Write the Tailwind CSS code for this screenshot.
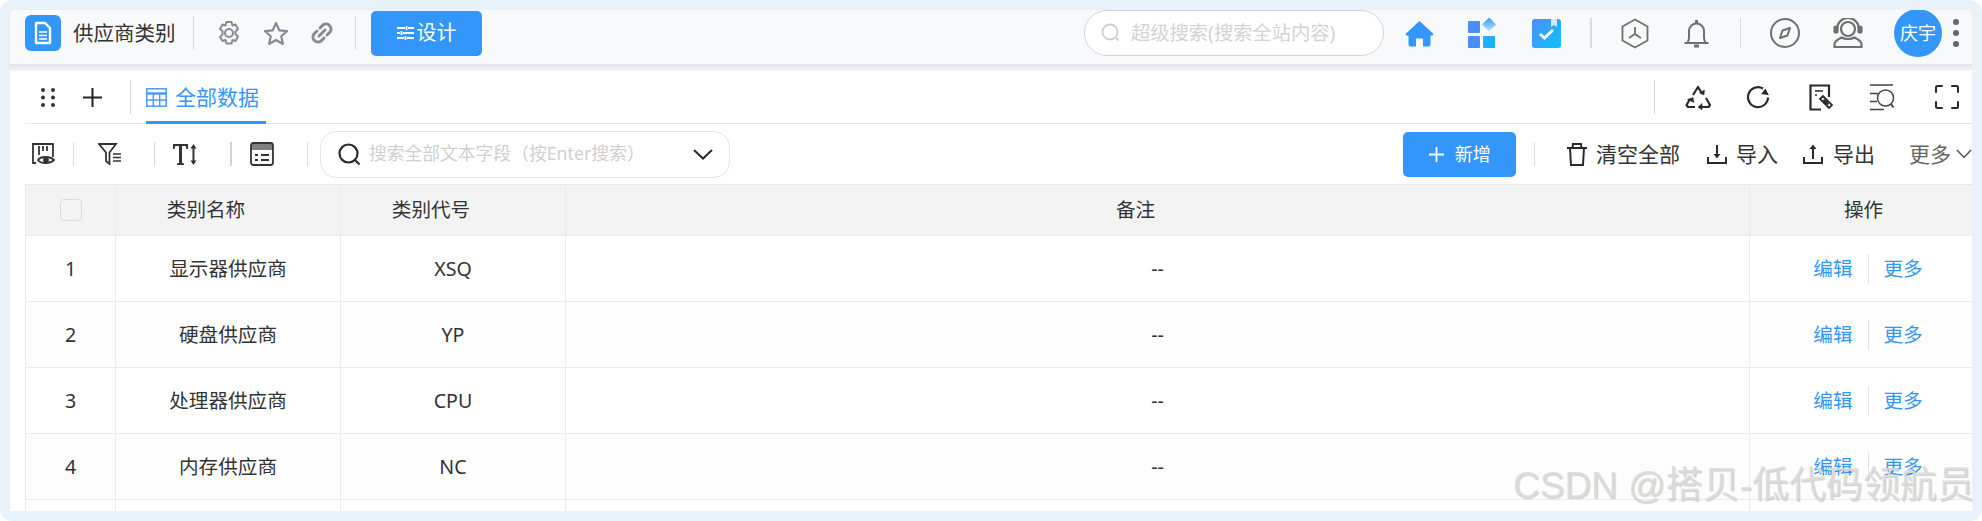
<!DOCTYPE html>
<html lang="zh-CN">
<head>
<meta charset="UTF-8">
<title>供应商类别</title>
<script src="https://cdn.jsdelivr.net/npm/@tailwindcss/browser@4"></script>
</head>
<body class="bg-white overflow-hidden font-['Noto_Sans','Noto_Sans_CJK_SC',sans-serif] text-[#333]">
<div class="relative h-[521px] w-[1982px] rounded-[12px] bg-[#e9f1fb] p-[10px]">
  <div class="flex h-[501px] flex-col overflow-hidden bg-white rounded-tl-[6px] rounded-tr-[6px]">

    <!-- Top bar -->
    <header class="flex h-[54px] shrink-0 items-center bg-[#f8f9fb] pb-2">
      <div class="ml-[15px] flex h-9 w-9 items-center justify-center rounded-[6px] bg-[#3296fa]">
        <svg width="20" height="24" viewBox="0 0 20 24" fill="none"><path d="M3 2h9l5 5v15H3z" stroke="#fff" stroke-width="2.4" stroke-linejoin="round"/><path d="M6 11h8M6 14.5h8M6 18h8" stroke="#fff" stroke-width="1.6"/></svg>
      </div>
      <span class="ml-3 w-[103px] text-[20.5px] leading-none whitespace-nowrap">供应商类别</span>
      <i class="ml-[17px] h-[34px] w-px bg-[#d8d8d8]"></i>
      <svg class="ml-[23px]" width="24" height="26" viewBox="0 0 24 26" fill="none" stroke="#858c96" stroke-width="2" stroke-linejoin="round"><path d="M9.5 2h5l1 3.5 3-1 2.5 4.5-2.500 2.500v2.500l2.500 2.500-2.500 4.500-3-1-1 3.500h-5l-1-3.500-3 1L3 17l2.500-2.500V11L3 9l2.500-4.500 3 1z"/><circle cx="12" cy="13" r="4"/></svg>
      <svg class="ml-[22px]" width="26" height="25" viewBox="0 0 26 25" fill="none" stroke="#858c96" stroke-width="2.200" stroke-linejoin="round"><path d="M13 2l3.300 7.300 7.700.8-5.800 5.200 1.700 7.700L13 19l-6.900 4 1.700-7.700L2 10.100l7.700-.8z"/></svg>
      <svg class="ml-[21px]" width="24" height="24" viewBox="0 0 24 24" fill="none" stroke="#858c96" stroke-width="3" stroke-linecap="round"><path d="M10 7l3-3a5 5 0 0 1 7 7l-3 3M14 17l-3 3a5 5 0 0 1-7-7l3-3M9 15l6-6"/></svg>
      <i class="ml-[21px] h-[34px] w-px bg-[#d8d8d8]"></i>
      <button class="ml-[15px] flex h-[45px] w-[111px] items-center justify-center rounded-[5px] bg-[#3296fa] text-[20px] text-white">
        <svg class="mr-[3px]" width="17" height="16" viewBox="0 0 17 16" stroke="#fff" stroke-width="1.800"><path d="M0 3h8M11 3h6M0 8h3M6 8h11M0 13h7M10 13h7M9.500 1v4M4.500 6v4M8.500 11v4"/></svg>设计
      </button>

      <div class="ml-[602px] flex h-[46px] w-[300px] items-center rounded-full border border-[#cdd3e0] bg-white pl-4">
        <svg width="20" height="20" viewBox="0 0 20 20" fill="none" stroke="#cfcfcf" stroke-width="1.800"><circle cx="9" cy="9" r="7.500"/><path d="M14.500 14.500l3 3"/></svg>
        <span class="ml-[10px] text-[19.300px] leading-none whitespace-nowrap text-[#d3d3d3]">超级搜索(搜索全站内容)</span>
      </div>
      <svg class="ml-[21px]" width="29" height="27" viewBox="0 0 29 27" fill="#3296fa"><path d="M14.500 1L28 13.500c.8.900.2 2-1 2h-1.500v9a2 2 0 0 1-2 2H18v-8h-7v8H5.500a2 2 0 0 1-2-2v-9H2c-1.200 0-1.800-1.100-1-2z"/></svg>
      <svg class="ml-[34px]" width="29" height="30" viewBox="0 0 29 30"><defs><linearGradient id="g1" x1="0" y1="0" x2="1" y2="1"><stop offset="0" stop-color="#2f9bff"/><stop offset="1" stop-color="#c5e6ff"/></linearGradient></defs><rect y="3" width="12" height="12" rx="1" fill="#4a8dfb"/><rect y="18" width="12" height="12" rx="1" fill="#4a8dfb"/><rect x="15" y="18" width="12" height="12" rx="1" fill="#1cb0ff"/><rect x="16" y="1.500" width="10" height="10" rx="1" fill="url(#g1)" transform="rotate(45 21 6.500)"/></svg>
      <svg class="ml-[35px]" width="29" height="29" viewBox="0 0 29 29"><defs><linearGradient id="g2" x1="0" y1="0" x2="1" y2="1"><stop offset="0" stop-color="#4c8dfb"/><stop offset="1" stop-color="#0cc4ff"/></linearGradient></defs><rect width="29" height="29" rx="3" fill="url(#g2)"/><path d="M19 0h6v8l-3-2-3 2z" fill="#cfe9ff"/><path d="M8 15l4.500 4L21 11" fill="none" stroke="#fff" stroke-width="3"/></svg>
      <i class="ml-[29px] h-[30px] w-[2px] bg-[#dcdcdc]"></i>
      <svg class="ml-[29px]" width="28" height="31" viewBox="0 0 28 31" fill="none" stroke="#6f6f6f" stroke-width="1.800"><path d="M14 1.500l12.500 7v14L14 29.500l-12.500-7v-14z"/><path d="M14 9v7M14 16l-6 4M14 16l6 4"/></svg>
      <svg class="ml-[34px]" width="27" height="31" viewBox="0 0 26 31" fill="none" stroke="#6f6f6f" stroke-width="2"><path d="M1 25h24M4 25c1-2 1.500-3 1.500-6v-6a7.500 7.500 0 0 1 15 0v6c0 3 .5 4 1.500 6"/><path d="M13 2v3" stroke-width="3"/><path d="M10.500 28h5" stroke-width="3"/></svg>
      <i class="ml-[30px] h-[30px] w-px bg-[#dcdcdc]"></i>
      <svg class="ml-[29px]" width="30" height="30" viewBox="0 0 30 30" fill="none" stroke="#6f6f6f" stroke-width="2"><circle cx="15" cy="15" r="14"/><path d="M20 10l-2.500 7.500L10 20l2.500-7.500z" stroke-linejoin="round"/></svg>
      <svg class="ml-[33px]" width="30" height="30" viewBox="0 0 30 30" fill="none" stroke="#6f6f6f" stroke-width="2.200"><circle cx="15" cy="11" r="7"/><path d="M4 14V11a11 11 0 0 1 22 0v3"/><rect x="1.500" y="8.500" width="3" height="6" rx="1.500" fill="#6f6f6f"/><rect x="25.500" y="8.500" width="3" height="6" rx="1.500" fill="#6f6f6f"/><path d="M1.500 29v-3c0-3 5-5.500 7-6.500 3 2 10 2 13 0 2 1 7 3.500 7 6.500v3z"/></svg>
      <div class="ml-[31px] flex h-12 w-12 items-center justify-center rounded-full bg-[#3296fa] text-[18px] text-white">庆宇</div>
      <div class="ml-[11px] flex flex-col gap-[5px]"><i class="h-[6px] w-[6px] rounded-full bg-[#666]"></i><i class="h-[6px] w-[6px] rounded-full bg-[#666]"></i><i class="h-[6px] w-[6px] rounded-full bg-[#666]"></i></div>
    </header>

    <div class="h-[7px] shrink-0 bg-linear-to-b from-[#e2e4e9] to-[#f3f4f6]"></div>

    <main class="flex min-h-0 flex-1 flex-col pl-[15px]">
      <!-- Tabs row -->
      <div class="flex h-[53px] shrink-0 items-center border-b border-[#e6e6e6]">
        <svg class="ml-4" width="14" height="19" viewBox="0 0 14 19" fill="#333"><circle cx="2" cy="2" r="2"/><circle cx="12" cy="2" r="2"/><circle cx="2" cy="9.500" r="2"/><circle cx="12" cy="9.500" r="2"/><circle cx="2" cy="17" r="2"/><circle cx="12" cy="17" r="2"/></svg>
        <svg class="ml-[28px]" width="19" height="19" viewBox="0 0 19 19" stroke="#222" stroke-width="2"><path d="M9.500 0v19M0 9.500h19"/></svg>
        <i class="ml-[28px] h-[34px] w-px bg-[#d8d8d8]"></i>
        <div class="relative ml-[15px] flex h-[53px] w-[120px] items-center border-b-[3px] border-[#3296fa] pt-[3px] text-[#3296fa]">
          <svg width="21" height="19" viewBox="0 0 21 19" fill="none" stroke="#4b9bfb" stroke-width="1.500"><rect x=".8" y=".8" width="19.400" height="17.400"/><path d="M.8 5.500h19.400" stroke-width="2.500"/><path d="M.8 12h19.400M7.300 5.500v12.700M13.700 5.500v12.700"/></svg>
          <span class="ml-2 text-[21px] leading-none">全部数据</span>
        </div>
        <i class="ml-[1388px] h-[34px] w-px bg-[#d8d8d8]"></i>
        <svg class="ml-[30px]" width="26" height="25" viewBox="0 0 26 25" fill="none" stroke="#2a2a2a" stroke-width="2.200" stroke-linejoin="round"><path d="M8 10l5-8 4 6.500"/><path d="M14.500 8l4.500 2 .5-5z" fill="#2a2a2a" stroke-width="0.500"/><path d="M21 13l4 7-1.500 2H16"/><path d="M17 18.500l-4 3.500 4 3z" fill="#2a2a2a" stroke-width="0.500"/><path d="M10 22H3l-1.500-2L5 14"/><path d="M2.500 14.500l5.500-2 1 5z" fill="#2a2a2a" stroke-width="0.500"/></svg>
        <svg class="ml-[35px]" width="25" height="25" viewBox="0 0 25 25" fill="none" stroke="#2a2a2a" stroke-width="2.200"><path d="M22 12.500A10 10 0 1 1 17 3.500"/><path d="M17 4l7 3-6.500 4z" fill="#2a2a2a" stroke="none" transform="rotate(40 19 7)"/></svg>
        <svg class="ml-[38px]" width="24" height="27" viewBox="0 0 24 27" fill="none" stroke="#2a2a2a" stroke-width="2.200"><path d="M20 13V1.500H1.500v24H12"/><path d="M6 7h8M6 11h2" stroke-width="1.500"/><path d="M11 15l3-3 4 4-3 3zM16 20l3-3 4 4-3 3zM14.500 15.500l5 5" stroke-width="1.800"/></svg>
        <svg class="ml-[37px]" width="26" height="27" viewBox="0 0 26 27" fill="none" stroke="#444" stroke-width="1.500"><path d="M0 1h23M0 9.500h8M0 17.500h7M0 25.500h14"/><circle cx="15.500" cy="14" r="8"/><path d="M21 20l2.500 3.500" stroke-width="2"/></svg>
        <svg class="ml-[39px]" width="24" height="24" viewBox="0 0 24 24" fill="none" stroke="#2a2a2a" stroke-width="2" stroke-linecap="round"><path d="M1 7V2.500A1.500 1.500 0 0 1 2.500 1H7M17 1h4.500A1.500 1.500 0 0 1 23 2.500V7M23 17v4.500a1.500 1.500 0 0 1-1.500 1.500H17M7 23H2.500A1.500 1.500 0 0 1 1 21.500V17"/></svg>
      </div>

      <!-- Toolbar -->
      <div class="flex h-[60px] shrink-0 items-center">
        <svg class="ml-[7px]" width="23" height="22" viewBox="0 0 23 22" fill="none" stroke="#333" stroke-width="1.800"><path d="M4 20H1V1h20v13M7 3v9M11 3v5M15 3v5"/><path d="M6 17c2.500-4 12-4 16 0-4 4-13.500 4-16 0z"/><circle cx="14" cy="17" r="2" fill="#333"/></svg>
        <i class="ml-[18px] h-6 w-px bg-[#dcdcdc]"></i>
        <svg class="ml-[24px]" width="23" height="22" viewBox="0 0 23 22" fill="none" stroke="#333" stroke-width="1.800"><path d="M1 1h17l-6.500 8.500V21l-3.500-3V9.500z"/><path d="M15 11h8M15 14.500h8M15 18h8" stroke-width="1.500"/></svg>
        <i class="ml-[33px] h-6 w-px bg-[#dcdcdc]"></i>
        <svg class="ml-[18px]" width="24" height="21" viewBox="0 0 24 21" fill="#333"><path d="M0 0h15v5h-1.500l-.8-3H9v17l2 .6V21H4v-1.400l2-.6V2H2.300l-.8 3H0z"/><path d="M20.500 0l3 4.500h-2V16.500h2l-3 4.500-3-4.500h2V4.500h-2z"/></svg>
        <i class="ml-[33px] h-6 w-[2px] bg-[#d4d4d4]"></i>
        <svg class="ml-[18px]" width="24" height="24" viewBox="0 0 24 24"><path d="M3 1h18a2 2 0 0 1 2 2v5H1V3a2 2 0 0 1 2-2z" fill="#7f7f7f"/><rect x="1" y="1" width="22" height="22" rx="2.500" fill="none" stroke="#333" stroke-width="1.800"/><path d="M5 13h3M11 13h8M5 18h3M11 18h8" stroke="#333" stroke-width="1.800"/></svg>
        <i class="ml-[33px] h-6 w-px bg-[#dcdcdc]"></i>
        <div class="ml-[12px] flex h-[47px] w-[411px] items-center rounded-[16px] border border-[#e6e6e6] pl-[17px]">
          <svg width="23" height="23" viewBox="0 0 23 23" fill="none" stroke="#2a2a2a" stroke-width="2.200"><circle cx="10.500" cy="10.500" r="9"/><path d="M17 17l4.500 4.500"/></svg>
          <span class="ml-2 w-[267px] text-[17.800px] leading-none whitespace-nowrap text-[#d0d0d0]">搜索全部文本字段（按Enter搜索）</span>
          <svg class="ml-[57px]" width="20" height="11" viewBox="0 0 20 11" fill="none" stroke="#2a2a2a" stroke-width="2"><path d="M1 1l9 8.500L19 1"/></svg>
        </div>
        <button class="ml-[673px] flex h-[45px] w-[113px] items-center justify-center rounded-[5px] bg-[#3296fa] text-[18px] text-white">
          <svg class="mr-[11px]" width="15" height="15" viewBox="0 0 15 15" stroke="#fff" stroke-width="1.800"><path d="M7.500 0v15M0 7.500h15"/></svg>新增
        </button>
        <i class="ml-[18px] h-6 w-px bg-[#dcdcdc]"></i>
        <svg class="ml-[32px]" width="20" height="23" viewBox="0 0 20 23" fill="none" stroke="#2a2a2a" stroke-width="2"><path d="M0 5h20M5.500 5l.5-4h8l.5 4M3 5l1 17h12l1-17"/></svg>
        <span class="ml-[9px] text-[21px] leading-none whitespace-nowrap">清空全部</span>
        <svg class="ml-[27px]" width="20" height="20" viewBox="0 0 20 20" fill="none" stroke="#2a2a2a" stroke-width="2"><path d="M1 13v6h18v-6M10 1v12"/><path d="M6.500 10h7L10 14.500z" fill="#2a2a2a" stroke="none"/></svg>
        <span class="ml-[9px] text-[21px] leading-none whitespace-nowrap">导入</span>
        <svg class="ml-[25px]" width="20" height="20" viewBox="0 0 20 20" fill="none" stroke="#2a2a2a" stroke-width="2"><path d="M1 13v6h18v-6M10 15V3"/><path d="M6.500 5h7L10 .5z" fill="#2a2a2a" stroke="none"/></svg>
        <span class="ml-[10px] text-[21px] leading-none whitespace-nowrap">导出</span>
        <span class="ml-[34px] text-[21px] leading-none whitespace-nowrap text-[#666]">更多</span>
        <svg class="ml-[5px]" width="16" height="10" viewBox="0 0 16 10" fill="none" stroke="#555" stroke-width="1.500"><path d="M1 1l7 7.500L15 1"/></svg>
      </div>

      <!-- Table -->
      <div class="grid grid-cols-[90px_225px_225px_1184px_1fr] auto-rows-[51px] border-t border-[#e8e8e8] bg-[#f3f3f3] text-[19.600px] [&>div]:flex [&>div]:items-center [&>div]:justify-center [&>div]:border-l [&>div]:border-b [&>div]:border-[#ebebeb]">
        <div><i class="h-[22px] w-[22px] rounded-[4px] border border-[#dcdcdc] bg-[#f3f3f3]"></i></div>
        <div class="pr-[44px]">类别名称</div>
        <div class="pr-[44px]">类别代号</div>
        <div class="pr-[44px]">备注</div>
        <div class="pl-[5px]">操作</div>
      </div>
      <div class="grid grid-cols-[90px_225px_225px_1184px_1fr] auto-rows-[66px] text-[19.600px] [&>div]:flex [&>div]:items-center [&>div]:justify-center [&>div]:border-l [&>div]:border-b [&>div]:border-[#ebebeb]">
        <div>1</div><div>显示器供应商</div><div>XSQ</div><div>--</div>
        <div class="pl-[14px] text-[#3296fa]"><span>编辑</span><i class="mx-[15px] h-[30px] w-px bg-[#e4e4e4]"></i><span>更多</span></div>

        <div class="bg-[#fdfdfd]">2</div><div class="bg-[#fdfdfd]">硬盘供应商</div><div class="bg-[#fdfdfd]">YP</div><div class="bg-[#fdfdfd]">--</div>
        <div class="bg-[#fdfdfd] pl-[14px] text-[#3296fa]"><span>编辑</span><i class="mx-[15px] h-[30px] w-px bg-[#e4e4e4]"></i><span>更多</span></div>

        <div>3</div><div>处理器供应商</div><div>CPU</div><div>--</div>
        <div class="pl-[14px] text-[#3296fa]"><span>编辑</span><i class="mx-[15px] h-[30px] w-px bg-[#e4e4e4]"></i><span>更多</span></div>

        <div class="bg-[#fdfdfd]">4</div><div class="bg-[#fdfdfd]">内存供应商</div><div class="bg-[#fdfdfd]">NC</div><div class="bg-[#fdfdfd]">--</div>
        <div class="bg-[#fdfdfd] pl-[14px] text-[#3296fa]"><span>编辑</span><i class="mx-[15px] h-[30px] w-px bg-[#e4e4e4]"></i><span>更多</span></div>

        <div></div><div></div><div></div><div></div><div></div>
      </div>
    </main>
  </div>

  <!-- Watermark -->
  <span class="absolute left-[1513px] top-[466px] font-['Liberation_Sans','Noto_Sans_CJK_SC',sans-serif] text-[37px] leading-[40px] whitespace-nowrap text-[#dcdcdc]/90 [text-shadow:1px_1px_1px_rgba(0,0,0,0.18)]">CSDN @搭贝-低代码领航员</span>
</div>
</body>
</html>
